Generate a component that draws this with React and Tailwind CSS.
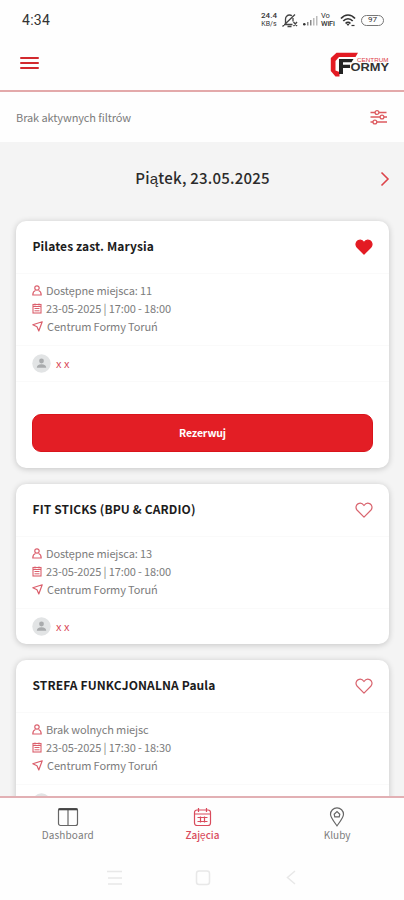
import React from 'react';

const sessions = [
  { title: 'Pilates zast. Marysia', titleClass: 'tracking-[0.1px]', seats: 'Dostępne miejsca: 11', time: '23-05-2025 | 17:00 - 18:00', coach: 'x x', liked: true, bookable: true },
  { title: 'FIT STICKS (BPU & CARDIO)', titleClass: 'tracking-[0.12px]', seats: 'Dostępne miejsca: 13', time: '23-05-2025 | 17:00 - 18:00', coach: 'x x' },
  { title: 'STREFA FUNKCJONALNA Paula', titleClass: 'tracking-[0.12px]', seats: 'Brak wolnych miejsc', time: '23-05-2025 | 17:30 - 18:30' },
];

function StatusBar() {
  return (
    <div className="flex h-10 shrink-0 items-center justify-between pl-[22px] pr-5 text-[#333]">
      <span className="font-['Roboto',sans-serif] text-[14px] leading-none tracking-[0.3px]">4:34</span>
      <div className="flex items-center">
        <div className="w-[18px] text-center font-['Roboto',sans-serif] text-[8px] font-medium leading-[8px]">
          <div>24.4</div>
          <div className="text-[7px] font-normal leading-[8px]">KB/s</div>
        </div>
        <svg className="ml-[3px]" width="17" height="15" viewBox="0 0 17 15" fill="none" stroke="#444" strokeWidth="1.3">
          <path d="M3 11.5h8.500M4.500 11V6a4 4 0 0 1 4-4c1 0 1.700.2 2.400.8M12 5v3.500M6.500 13.500h4M1.500 13.500 14 1.500M12.500 9l3.500 4M16 9l-3.500 4" />
        </svg>
        <svg className="ml-[4px]" width="19" height="12" viewBox="0 0 18 12">
          <circle cx="1.800" cy="10.200" r="1.300" fill="#333" />
          <path d="M4.500 8h1.500v3.500H4.500zM7.500 6H9v5.500H7.500z" fill="#888" />
          <path d="M10.500 4H12v7.500h-1.500zM13.500 2H15v9.500h-1.500z" fill="#bbb" />
        </svg>
        <div className="w-[16px] font-['Roboto',sans-serif] text-[7.5px] leading-[8px]">
          <div>Vo</div>
          <div className="font-medium tracking-[-0.2px]">WiFi</div>
        </div>
        <svg className="ml-[3px]" width="16" height="13" viewBox="0 0 16 13" fill="none" stroke="#333" strokeWidth="1.700">
          <path d="M1 4.500C5-.2 11-.2 15 4.500M3.300 7C6 4 10 4 12.700 7M5.600 9.500c1.400-1.600 3.400-1.600 4.800 0" />
          <path d="m6.500 10 1.500 2 1.500-2z" fill="#333" stroke="none" />
          <path d="M11.500 11.500h3" strokeWidth="1.200" />
        </svg>
        <div className="ml-[5px] flex h-[11px] w-[23px] items-center justify-center rounded-full border border-[#777] font-['Roboto',sans-serif] text-[8px] leading-none">97</div>
      </div>
    </div>
  );
}

function Logo() {
  return (
    <svg width="60" height="26" viewBox="0 0 60 26">
      <path d="M6.500.8H28L25.500 5H9L5.500 9v9.500L9.500 20v4.500H5.500L.8 19V6z" fill="#e31b23" />
      <path d="M9 7H23.500L21.500 10.200H13v2.600h7V16h-7v6H9z" fill="#222" />
      <text x="27" y="9.500" fontFamily="Liberation Sans, sans-serif" fontSize="5" fill="#e04048" textLength="31.500" lengthAdjust="spacingAndGlyphs">CENTRUM</text>
      <text x="20.500" y="19" fontFamily="Liberation Sans, sans-serif" fontSize="10.500" fontWeight="700" fill="#333" textLength="38.500" lengthAdjust="spacingAndGlyphs">ORMY</text>
    </svg>
  );
}

function FilterIcon() {
  return (
    <svg width="20" height="18" viewBox="0 0 20 18" fill="none" stroke="#dd5b60" strokeWidth="1.300">
      <path d="M1.500 4.500H6M10 4.500h7.500M1.500 9h9.500M15 9h3M1.500 14h2.500M7.800 14H18" />
      <circle cx="8" cy="4.500" r="1.900" />
      <circle cx="13" cy="9" r="1.900" />
      <circle cx="5.900" cy="14" r="1.900" />
    </svg>
  );
}

function Heart({ filled }) {
  return (
    <svg width="18" height="16" viewBox="0 0 19 17" fill={filled ? '#e31b23' : 'none'} stroke={filled ? '#e31b23' : '#d9646e'} strokeWidth="1.300" strokeLinejoin="round">
      <path d="M9.500 16 2.300 8.800C.2 6.600.8 3.300 3 2c2.200-1.200 4.900-.6 6.500 1.700C11.100 1.400 13.800.8 16 2c2.200 1.300 2.800 4.600.7 6.800z" />
    </svg>
  );
}

function PersonIcon() {
  return (
    <svg width="10" height="11" viewBox="0 0 10 11" fill="none" stroke="#db5f6c" strokeWidth="1.200">
      <circle cx="5" cy="3" r="2.200" />
      <path d="M3.500 5.500C1.800 6 .8 7.500.8 10h8.400c0-2.500-1-4-2.700-4.500" />
    </svg>
  );
}

function SmallCalendar() {
  return (
    <svg width="10" height="11" viewBox="0 0 10 11" fill="none" stroke="#db5f6c">
      <rect x="1" y="1.500" width="8" height="8.500" strokeWidth="1.100" />
      <path d="M1 3.500h8M3 .5v2M7 .5v2M2.500 5.500h5M2.500 7.800h5" />
    </svg>
  );
}

function PlaneIcon() {
  return (
    <svg width="11" height="11" viewBox="0 0 11 11" fill="none" stroke="#db5f6c" strokeWidth="1.200" strokeLinejoin="round">
      <path d="M.8 3.800 10.200.8 6.800 10 5 5.800z" />
    </svg>
  );
}

function Row({ icon, children }) {
  return (
    <div className="flex h-[18px] items-center gap-1 text-[11px] text-[#7c7c7c]">
      {icon}
      <span className="whitespace-nowrap leading-[18px] tracking-[-0.12px]">{children}</span>
    </div>
  );
}

function Card({ item }) {
  return (
    <article className="shrink-0 rounded-[10px] bg-white shadow-[0_1px_6px_rgba(0,0,0,0.2)]">
      <div className="flex h-[53px] items-center justify-between border-b border-[#fafafa] px-4">
        <h2 className={'whitespace-nowrap pb-[2px] pl-[0.5px] text-[12px] font-bold leading-5 text-[#1c1c1c] ' + item.titleClass}>{item.title}</h2>
        <Heart filled={item.liked} />
      </div>
      <div className="h-[72px] border-b border-[#fafafa] px-4 pt-[7px]">
        <Row icon={<PersonIcon />}>{item.seats}</Row>
        <Row icon={<SmallCalendar />}>{item.time}</Row>
        <Row icon={<PlaneIcon />}>Centrum Formy Toruń</Row>
      </div>
      <div className="flex h-[35px] items-center px-4">
        <svg width="19" height="19" viewBox="0 0 19 19">
          <circle cx="9.500" cy="9.500" r="9.200" fill="#e2e4e5" />
          <circle cx="9.500" cy="7" r="2.400" fill="#a9abad" />
          <path d="M4.800 13.800c0-2.300 1.600-3.500 4.700-3.500s4.700 1.200 4.700 3.500z" fill="#a9abad" />
        </svg>
        {item.coach && <span className="ml-[5px] pb-[1px] text-[11px] leading-4 text-[#d94b58]">{item.coach}</span>}
      </div>
      {item.bookable && (
        <div className="border-t border-[#fafafa] px-4 pb-4 pt-8">
          <button className="flex h-[38px] w-full items-center justify-center rounded-[9px] border border-[#d9141b] bg-[#e31e25] text-[10.5px] font-bold tracking-[-0.15px] text-white">Rezerwuj</button>
        </div>
      )}
    </article>
  );
}

function TabBar() {
  return (
    <nav className="grid h-[52px] shrink-0 grid-cols-3 border-t-2 border-[#e2b0b4] bg-[#fefefe] text-[10px] leading-[14px] text-[#7c7c7c]">
      <div className="flex flex-col items-center gap-[1px] pl-[1px] pt-[9px]">
        <svg width="22" height="20" viewBox="0 0 22 20" fill="none" stroke="#666" strokeWidth="1.200">
          <rect x="1.500" y="1.500" width="19" height="17" rx="2" />
          <path d="M11 2v16.500" />
          <path d="M1.500 2.300h19" strokeWidth="2" stroke="#444" />
        </svg>
        <span className="tracking-[0.15px]">Dashboard</span>
      </div>
      <div className="flex flex-col items-center gap-[1px] pl-[1px] pt-[9px] text-[#d94b5c]">
        <svg width="19" height="20" viewBox="0 0 19 20" fill="none" stroke="#d94b5c" strokeWidth="1.200">
          <rect x="1.500" y="3" width="16" height="15.500" rx="2.500" />
          <path d="M1.500 7h16M5.500 1v4M13.500 1v4M4.500 10.500h10M4.500 14.500h10M7.500 9.500v6M11.500 9.500v6" />
        </svg>
        <span className="font-medium">Zajęcia</span>
      </div>
      <div className="flex flex-col items-center gap-[1px] pl-[1px] pt-[9px]">
        <svg width="16" height="20" viewBox="0 0 16 20" fill="none" stroke="#666" strokeWidth="1.200">
          <path d="M8 18.800C4 13.500 1.500 10.500 1.500 7.300a6.500 6.500 0 0 1 13 0c0 3.200-2.500 6.200-6.500 11.500z" />
          <path d="M5.200 7.200 8 4.600l2.800 2.600-.6 2.600H5.800z" />
        </svg>
        <span>Kluby</span>
      </div>
    </nav>
  );
}

export default function App() {
  return (
    <div className="flex h-[900px] w-[404px] flex-col overflow-hidden bg-[#fefefe] font-['Noto_Sans_CJK_SC',sans-serif]">
      <StatusBar />
      <header className="flex h-[52px] shrink-0 items-center justify-between border-b-2 border-[#e3a9aa] pl-5 pr-[14px]">
        <div className="flex w-[19px] flex-col gap-[3px] pb-[4px]">
          <div className="h-[2px] rounded bg-[#d2292e]" />
          <div className="h-[2px] rounded bg-[#d2292e]" />
          <div className="h-[2px] rounded bg-[#d2292e]" />
        </div>
        <Logo />
      </header>
      <div className="flex h-[50px] shrink-0 items-center justify-between pl-4 pr-[15px]">
        <span className="text-[11px] tracking-[-0.1px] text-[#7c7c7c]">Brak aktywnych filtrów</span>
        <FilterIcon />
      </div>
      <main className="flex min-h-0 flex-1 flex-col overflow-hidden bg-[#f4f4f4] pl-4 pr-[15px]">
        <div className="relative flex h-[79px] shrink-0 items-center justify-center pb-[6px]">
          <span className="text-[15px] font-medium tracking-[0.22px] text-[#2b2b2b]">Piątek, 23.05.2025</span>
          <svg className="absolute right-[-1px] top-[29px]" width="10" height="16" viewBox="0 0 10 16" fill="none" stroke="#dc4349" strokeWidth="1.600">
            <path d="M1.500 1.500 8 8l-6.500 6.500" />
          </svg>
        </div>
        <div className="flex flex-col gap-4">
          {sessions.map((s) => <Card key={s.title} item={s} />)}
        </div>
      </main>
      <TabBar />
      <div className="flex h-[52px] shrink-0 justify-center pt-[21px]">
        <svg width="190" height="18" viewBox="0 0 190 18" fill="none" stroke="#e8e8e8" strokeWidth="1.500">
          <path d="M0 2.500h15M1 9h14M1 15h14" />
          <rect x="89.500" y="2" width="13" height="13.500" rx="2.500" />
          <path d="m188 2-7.500 6.500 7.500 6.500" />
        </svg>
      </div>
    </div>
  );
}
